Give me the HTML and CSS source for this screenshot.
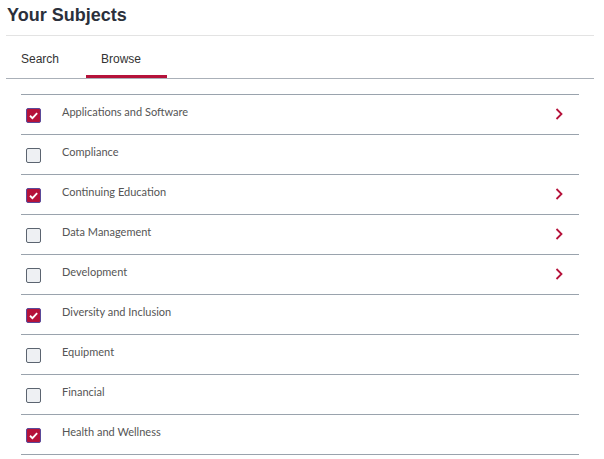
FILE: index.html
```html
<!DOCTYPE html>
<html lang="en">
<head>
    <meta charset="UTF-8">
    <meta name="viewport" content="width=device-width, initial-scale=1.0">
    <title>Your Subjects</title>
    <link rel="stylesheet" href="styles.css">
</head>
<body>
    <div class="container">
        <header>
            <h1>Your Subjects</h1>
        </header>
        <!-- Tabs -->
        <div class="tabs">
            <a href="#" class="tab">Search</a>
            <a href="#" class="tab active">Browse</a>
        </div>
        <!-- Subject list -->
        <ul class="subject-list">
            <li class="subject checked">
                <span class="box"><svg viewBox="0 0 10 10"><path d="M2.3 5.2 L4.2 7 L7.8 3.2"/></svg></span>
                <span class="name">Applications and Software</span>
                <span class="chevron"><svg viewBox="0 0 8 12"><path d="M1.5 1 L6.5 6 L1.5 11"/></svg></span>
            </li>
            <li class="subject">
                <span class="box"></span>
                <span class="name">Compliance</span>
            </li>
            <li class="subject checked">
                <span class="box"><svg viewBox="0 0 10 10"><path d="M2.3 5.2 L4.2 7 L7.8 3.2"/></svg></span>
                <span class="name">Continuing Education</span>
                <span class="chevron"><svg viewBox="0 0 8 12"><path d="M1.5 1 L6.5 6 L1.5 11"/></svg></span>
            </li>
            <li class="subject">
                <span class="box"></span>
                <span class="name">Data Management</span>
                <span class="chevron"><svg viewBox="0 0 8 12"><path d="M1.5 1 L6.5 6 L1.5 11"/></svg></span>
            </li>
            <li class="subject">
                <span class="box"></span>
                <span class="name">Development</span>
                <span class="chevron"><svg viewBox="0 0 8 12"><path d="M1.5 1 L6.5 6 L1.5 11"/></svg></span>
            </li>
            <li class="subject checked">
                <span class="box"><svg viewBox="0 0 10 10"><path d="M2.3 5.2 L4.2 7 L7.8 3.2"/></svg></span>
                <span class="name">Diversity and Inclusion</span>
            </li>
            <li class="subject">
                <span class="box"></span>
                <span class="name">Equipment</span>
            </li>
            <li class="subject">
                <span class="box"></span>
                <span class="name">Financial</span>
            </li>
            <li class="subject checked">
                <span class="box"><svg viewBox="0 0 10 10"><path d="M2.3 5.2 L4.2 7 L7.8 3.2"/></svg></span>
                <span class="name">Health and Wellness</span>
            </li>
        </ul>
    </div>
</body>
</html>
```

FILE: styles.css
```css
/* General */
body {
    margin: 0;
    padding: 0;
    background: #ffffff;
    font-family: "Liberation Sans", Arial, sans-serif;
    color: #333;
}

.container {
    padding: 0 10px 0 6px;
}

/* Header */
header h1 {
    margin: 0;
    padding: 3px 1px 8px;
    font-size: 18px;
    line-height: 24px;
    font-weight: bold;
    color: #2b303b;
    border-bottom: 1px solid #e3e3e3;
}

/* Tabs */
.tabs {
    display: flex;
    border-bottom: 1px solid #aab0b8;
}

.tab {
    box-sizing: border-box;
    width: 80px;
    padding: 17px 0 10px 15px;
    font-size: 12px;
    line-height: 12px;
    color: #333;
    text-decoration: none;
    border-bottom: 3px solid transparent;
}

.tab.active {
    width: 81px;
    border-bottom-color: #b5123a;
}

/* Subject list */
.subject-list {
    list-style: none;
    margin: 15px 15px 0;
    padding: 0;
    border-top: 1px solid #9aa3ad;
}

.subject {
    display: flex;
    align-items: center;
    height: 39px;
    padding: 0 16px 0 5px;
    border-bottom: 1px solid #9aa3ad;
}

.box {
    box-sizing: border-box;
    width: 15px;
    height: 15px;
    margin-top: 1px;
    border: 1.5px solid #5b6470;
    border-radius: 2px;
    background: #eef0f3;
    display: flex;
}

.box svg {
    width: 100%;
    height: 100%;
    fill: none;
    stroke: #fff;
    stroke-width: 1.4;
}

.subject.checked .box {
    background: #b5123a;
    border-color: #5a4a9a;
}

.name {
    flex-grow: 1;
    margin-left: 21px;
    margin-top: -7px;
    font-family: Lato, sans-serif;
    font-size: 11px;
    color: #555;
}

.chevron {
    display: flex;
    width: 8px;
    height: 12px;
    margin-top: -2px;
}

.chevron svg {
    width: 100%;
    height: 100%;
    fill: none;
    stroke: #b5123a;
    stroke-width: 1.8;
}
```
